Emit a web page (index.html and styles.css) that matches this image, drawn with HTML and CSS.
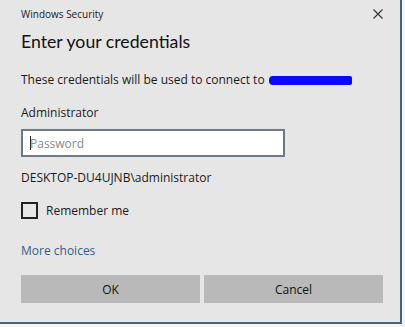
FILE: index.html
```html
<!DOCTYPE html>
<html>
<head>
<meta charset="utf-8">
<link rel="stylesheet" href="styles.css">
</head>
<body>
<div class="dialog">
  <div class="titlebar">
    <span class="app">Windows Security</span>
    <svg class="close" width="10" height="10" viewBox="0 0 10 10"><path d="M0.5 0.5 L9.5 9.5 M9.5 0.5 L0.5 9.5" stroke="#333" stroke-width="1.1" fill="none"/></svg>
  </div>
  <h1 class="heading">Enter your credentials</h1>
  <p class="line connect">These credentials will be used to connect to <span class="redact"></span></p>
  <p class="line user">Administrator</p>
  <div class="input"><span class="caret"></span><span class="placeholder">Password</span></div>
  <p class="line domain">DESKTOP-DU4UJNB\administrator</p>
  <label class="remember"><span class="box"></span><span>Remember me</span></label>
  <a class="more">More choices</a>
  <div class="buttons">
    <button class="btn">OK</button>
    <button class="btn">Cancel</button>
  </div>
</div>
</body>
</html>
```
FILE: styles.css
```css
html, body {
  margin: 0;
  padding: 0;
  background: #f3f4f6;
}
body {
  width: 405px;
  height: 327px;
  overflow: hidden;
  font-family: "Open Sans", "Noto Sans", sans-serif;
  color: #1a1a1a;
}
.dialog {
  box-sizing: border-box;
  width: 402px;
  height: 324px;
  background: #e6e6e6;
  border-right: 2px solid #46627e;
  border-bottom: 2px solid #46627e;
  padding: 0 21px;
  display: flex;
  flex-direction: column;
}
.titlebar {
  height: 27px;
  display: flex;
  align-items: center;
  justify-content: space-between;
}
.app {
  font-size: 10px;
  color: #222;
}
.close {
  margin-right: -4px;
}
.heading {
  margin: 2px 0 0;
  font-family: "Lato", "Open Sans", sans-serif;
  font-size: 17.7px;
  font-weight: 400;
  line-height: 26px;
  color: #111;
}
.line {
  margin: 0;
  font-size: 12px;
  line-height: 16px;
}
.connect {
  margin-top: 17px;
  display: flex;
  align-items: center;
}
.redact {
  display: inline-block;
  width: 83px;
  height: 9px;
  background: #0a0afa;
  border-radius: 4px 2px 2px 4px;
  margin-left: 4px;
}
.user {
  margin-top: 17px;
}
.input {
  margin-top: 8px;
  width: 264px;
  height: 28px;
  box-sizing: border-box;
  border: 2px solid #6d7a86;
  background: #fff;
  display: flex;
  align-items: center;
  padding-left: 7px;
}
.caret {
  width: 1px;
  height: 14px;
  background: #222;
}
.placeholder {
  font-size: 12px;
  color: #8a8a8a;
  margin-left: -1px;
}
.domain {
  margin-top: 13px;
}
.remember {
  margin-top: 15px;
  display: flex;
  align-items: center;
  font-size: 12px;
  height: 18px;
}
.box {
  width: 17px;
  height: 17px;
  box-sizing: border-box;
  border: 2px solid #222;
  margin-right: 8px;
}
.more {
  margin-top: 24px;
  font-size: 12px;
  line-height: 16px;
  color: #2f5e8e;
}
.buttons {
  margin-top: 16px;
  display: flex;
  gap: 4px;
  width: 362px;
}
.btn {
  flex: 1;
  height: 28px;
  border: none;
  background: #b9b9b9;
  font-family: inherit;
  font-size: 12px;
  color: #111;
  padding: 0;
}
```
